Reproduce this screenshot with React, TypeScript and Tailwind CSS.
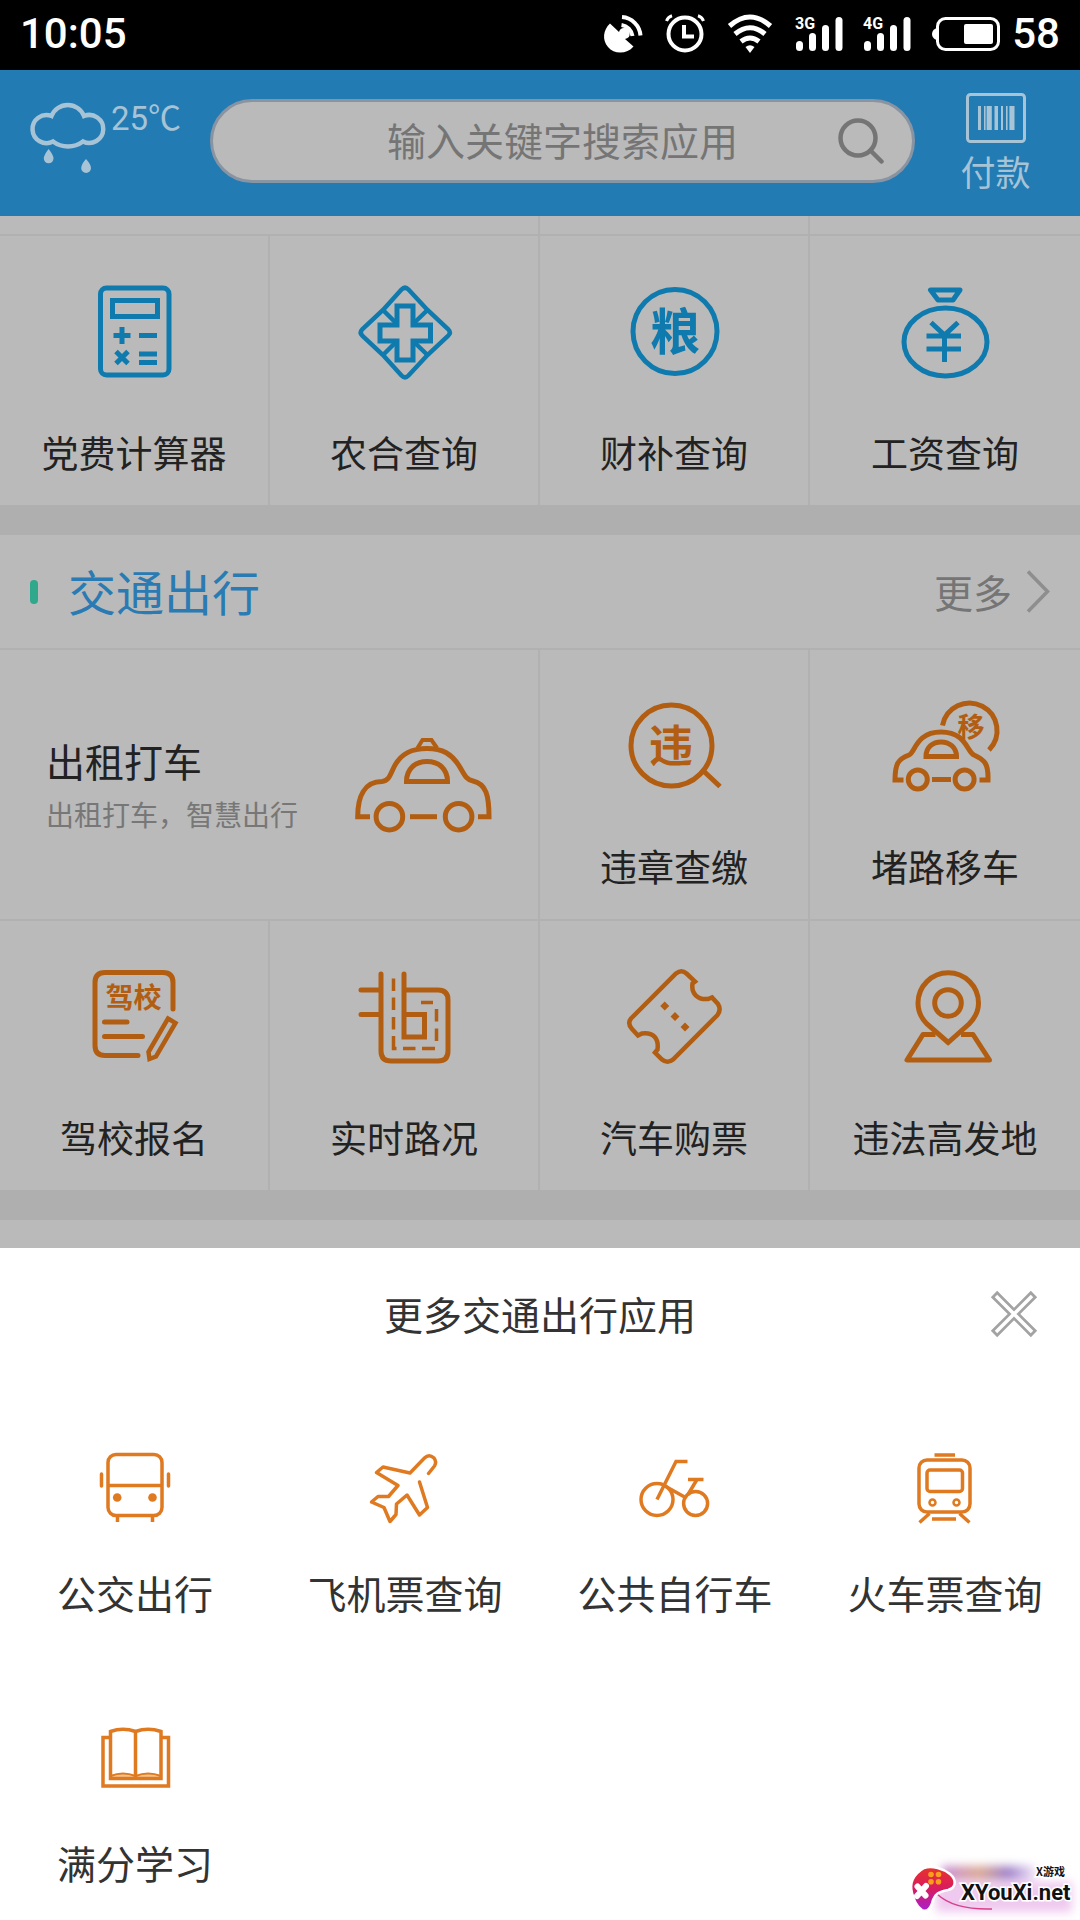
import type { ReactNode } from "react";

type App = { name: string; icon: ReactNode };

const cjkBold = "font-['Noto_Sans_CJK_SC',sans-serif] font-bold";

const DishIcon = () => (
  <svg className="w-[38px] h-[38px] overflow-visible" viewBox="0 0 38 38" fill="none" stroke="currentColor" strokeWidth="4">
    <path d="M6 8.500 15 17A5.500 5.500 0 1 1 21 24L29.500 31.500C23 39.500 10 39.500 4 32C-2 25-1 15 6 8.500Z" fill="currentColor" stroke="none" />
    <path d="M17.500 10A13 13 0 0 1 28.500 21M18 2A20 20 0 0 1 36.500 20.500" />
  </svg>
);

const AlarmIcon = () => (
  <svg className="w-[38px] h-[38px] overflow-visible" viewBox="0 0 38 38" fill="none" stroke="currentColor" strokeWidth="4">
    <circle cx="19" cy="19" r="16.5" />
    <path d="M18 10V21.500H28" />
    <path d="M.5 6Q2 2 6 .8M37.500 6Q36 2 32 .8" strokeWidth="3" />
  </svg>
);

const WifiIcon = () => (
  <svg className="w-[44px] h-[38px] overflow-visible" viewBox="0 0 44 38" fill="none" stroke="currentColor" strokeWidth="5">
    <path d="M1.500 11Q22-7 42.500 11M7 19Q22 6.500 37 19M13 26.500Q22 19.500 31 26.500" />
    <path d="M17.500 32Q22 28.500 26.500 32L22 38Z" fill="currentColor" stroke="none" />
  </svg>
);

const SignalIcon = ({ label }: { label: string }) => (
  <svg className="w-[47px] h-[34px] overflow-visible" viewBox="0 0 47 34" fill="currentColor">
    <text x="-1" y="12" className="font-[Roboto,sans-serif] font-bold text-[16px]">{label}</text>
    <rect x="0" y="24" width="7" height="10" rx="3.5" />
    <rect x="13" y="16" width="7" height="18" rx="3.5" />
    <rect x="26" y="8" width="7" height="26" rx="3.5" />
    <rect x="39.5" y="0" width="7" height="34" rx="3.5" />
  </svg>
);

const BatteryIcon = () => (
  <svg className="w-[68px] h-[34px]" viewBox="0 0 68 34" fill="currentColor">
    <path d="M4.500 11Q0 13 0 17T4.500 23Z" />
    <rect x="5.5" y="1.500" width="61" height="31" rx="8" fill="none" stroke="currentColor" strokeWidth="3" />
    <rect x="32" y="7" width="29" height="20" rx="2" />
  </svg>
);

const RainIcon = () => (
  <svg className="w-[75px] h-[72px] overflow-visible" viewBox="0 0 75 72" fill="none" stroke="currentColor" strokeWidth="4.5">
    <path d="M21.500 14A17.500 17.500 0 0 1 54 14A14 14 0 1 1 53 39.500A25 25 0 0 1 23 39.500A14 14 0 1 1 21.500 14Z" />
    <path d="M18.600 47Q23.500 53 23.500 56.500A4.800 4.800 0 0 1 13.800 56.500Q13.800 53 18.600 47ZM56 57Q61 62.500 61 66A4.800 4.800 0 0 1 51.200 66Q51.200 62.500 56 57Z" fill="currentColor" stroke="none" />
  </svg>
);

const SearchIcon = () => (
  <svg className="w-[46px] h-[46px]" viewBox="0 0 46 46" fill="none" stroke="currentColor" strokeWidth="4.5">
    <circle cx="20" cy="20" r="17.5" />
    <path d="M32.500 32.500 43.500 43.500" strokeLinecap="round" />
  </svg>
);

const BarcodeIcon = () => (
  <svg className="w-[60px] h-[50px]" viewBox="0 0 60 50" fill="currentColor">
    <rect x="1.500" y="1.500" width="57" height="47" rx="3" fill="none" stroke="currentColor" strokeWidth="3" />
    <path d="M12 13h3v24h-3zM18 13h1.600v24H18zM20.600 13h5.200v24h-5.200zM28.500 13H32v24h-3.500zM35 13h2v24h-2zM40 13h1.600v24H40zM43.400 13h5.100v24h-5.100z" />
  </svg>
);

// 96px line icon used by the tiles on the home grid
const TileIcon = ({ children }: { children: ReactNode }) => (
  <svg className="w-24 h-24 overflow-visible" viewBox="0 0 96 96" fill="none" stroke="currentColor" strokeWidth="5">
    {children}
  </svg>
);

// 72px line icon used inside the bottom sheet
const SheetIcon = ({ children }: { children: ReactNode }) => (
  <svg className="w-[72px] h-[72px] overflow-visible" viewBox="0 0 72 72" fill="none" stroke="currentColor" strokeWidth="3.5">
    {children}
  </svg>
);

const TaxiIcon = () => (
  <svg className="w-[137px] h-24 shrink-0 text-[#b25e12]" viewBox="0 0 137 96" fill="none" stroke="currentColor" strokeWidth="5">
    <path d="M15 79.700H2.700C2.700 60 9 44.500 27 44.500C34 44 35 38 39 30C46 16 57 11.500 72 11.500S97 16 106 32C110 39 112 43 118 44C131 47 134 58 134 79.700H123" />
    <path d="M62.500 11 67.500 3H76.500L82 11" strokeWidth="4" />
    <path d="M51.500 44.500C51.500 32 60 24.500 72 24.500S92.500 32 92.500 44.500Z" />
    <circle cx="34.4" cy="79.7" r="13.3" />
    <circle cx="103.6" cy="79.7" r="13.3" />
    <path d="M55 79.700H82" />
  </svg>
);

const queryApps: App[] = [
  {
    name: "党费计算器",
    icon: (
      <TileIcon>
        <rect x="14.5" y="4" width="68.5" height="87" rx="6" />
        <rect x="26.5" y="16.5" width="45" height="16" />
        <path d="M27.500 51.500H44.500M36 43V60M53 51.500H71M53 70H71M53 78.500H71M30 67.500 42 79.500M42 67.500 30 79.500" />
      </TileIcon>
    ),
  },
  {
    name: "农合查询",
    icon: (
      <TileIcon>
        <path d="M27 26 45.500 5.500Q49 2 52.500 5.500L71.500 26 92 45Q95.500 48.500 92 52L71.500 71 52.500 91.500Q49 95 45.500 91.500L27 71 6.500 52Q3 48.500 6.500 45Z" strokeWidth="4.5" />
        <path d="M27 26 40 39M71.500 26 58 39M27 71 40 58M71.500 71 58 58" strokeWidth="4.5" />
        <path d="M41 22H57V41H74.500V57H57V76H41V57H24V41H41Z" />
      </TileIcon>
    ),
  },
  {
    name: "财补查询",
    icon: (
      <TileIcon>
        <circle cx="49" cy="47.5" r="42" />
        <text x="49" y="66" textAnchor="middle" fill="currentColor" stroke="none" className={`${cjkBold} text-[50px]`}>粮</text>
      </TileIcon>
    ),
  },
  {
    name: "工资查询",
    icon: (
      <TileIcon>
        <ellipse cx="48.500" cy="58" rx="41.5" ry="34" />
        <path d="M33.500 6H63L56 16H41Z" strokeLinejoin="round" />
        <path d="M29.500 52H64M29.500 65H64M47.500 50V78M34 38.500 47.500 51 61 38.500" />
      </TileIcon>
    ),
  },
];

const violationApps: App[] = [
  {
    name: "违章查缴",
    icon: (
      <TileIcon>
        <circle cx="45.500" cy="47.500" r="40.5" />
        <path d="M77 72.500 94 88.500" />
        <text x="45" y="64" textAnchor="middle" fill="currentColor" stroke="none" className={`${cjkBold} text-[44px]`}>违</text>
      </TileIcon>
    ),
  },
  {
    name: "堵路移车",
    icon: (
      <TileIcon>
        <path d="M6.500 82H-2C-2 66 1 61 12 57C18 55 19 34 44 34S70 54 77 57C88 62 91.500 66 91 82H82.500" />
        <path d="M29 58.500C29 49 36 44 44 44S59.500 49 59.500 58.500Z" />
        <circle cx="20.800" cy="81.500" r="9.5" />
        <circle cx="67.600" cy="81.500" r="9.5" />
        <path d="M35 81.500H54" />
        <path d="M45.500 27.500A27.500 27.500 0 1 1 92 52" />
        <text x="74" y="39" textAnchor="middle" fill="currentColor" stroke="none" className={`${cjkBold} text-[27px]`}>移</text>
      </TileIcon>
    ),
  },
];

const trafficApps: App[] = [
  {
    name: "驾校报名",
    icon: (
      <TileIcon>
        <path d="M52 86.500H19Q9 86.500 9 76.500V13.500Q9 3.500 19 3.500H77Q87 3.500 87 13.500V40M18.500 53H41M18.500 67.500H56.500" strokeLinecap="round" />
        <path d="M62.500 83 82 49.500 89.500 54 70 87.500 63.500 90Z" strokeWidth="4.5" />
        <text x="47.500" y="39" textAnchor="middle" fill="currentColor" stroke="none" className={`${cjkBold} text-[28px]`}>驾校</text>
      </TileIcon>
    ),
  },
  {
    name: "实时路况",
    icon: (
      <TileIcon>
        <path d="M25 5V82Q25 92 35 92H82Q92 92 92 82V31Q92 21 82 21H48M48 5V68H68.500V45.500H48M5 21H25M5 45.500H25" strokeLinecap="round" />
        <path d="M37.500 9.500V22M37.500 28.500V41M37.500 48V60.500M37.500 67V79.500H40.500M47 79.500H59.500M66 79.500H79M80.500 72V59.500M80.500 52.500V40M77 33.500H65" strokeWidth="3.5" />
      </TileIcon>
    ),
  },
  {
    name: "汽车购票",
    icon: (
      <TileIcon>
        <path d="M5 49.500 50 4.500Q55.500 0 60.500 4.500L69 12.500 66.500 14.500C65 25 72 31 82 30L86 28.500 92 35Q95.500 40.500 91.500 46L47 90.500Q41.500 95 36 90.500L29 83.500 31.500 80.500C33 69 27 63 16 64.500L12 66.500 6 60Q1 54.500 5 49.500Z" strokeWidth="4.5" />
        <path d="M38.700 32.500 43.200 37 38.700 41.500 34.200 37ZM49 43 53.500 47.500 49 52 44.500 47.500ZM59 53.500 63.500 58 59 62.500 54.500 58Z" fill="currentColor" stroke="none" />
      </TileIcon>
    ),
  },
  {
    name: "违法高发地",
    icon: (
      <TileIcon>
        <path d="M51.200 73.500 30 55C24 49 21 41 21 34A30 30 0 0 1 81.500 34C81.500 41 78 49 72 55Z" />
        <circle cx="51" cy="34" r="13.3" />
        <path d="M38.500 65.500H26L10 91H92.500L76 65.500H64" strokeLinejoin="round" />
      </TileIcon>
    ),
  },
];

const moreApps: App[] = [
  {
    name: "公交出行",
    icon: (
      <SheetIcon>
        <rect x="9" y="2.500" width="54" height="61" rx="8" />
        <path d="M9 33.500H63M18.500 65V70M53.500 65V70" />
        <path d="M2.500 22V34M69.500 22V34" strokeLinecap="round" />
        <circle cx="18.200" cy="45.500" r="4.300" fill="currentColor" stroke="none" />
        <circle cx="53.500" cy="45.500" r="4.300" fill="currentColor" stroke="none" />
      </SheetIcon>
    ),
  },
  {
    name: "飞机票查询",
    icon: (
      <SheetIcon>
        <path d="M59.500 21.500 65.500 14Q68 10 65 6Q60 1.500 55.500 6L41 21 14 15 7.500 20.500 29 33.500 19.500 44.500H9L2.500 50 15 55.500 21 69.500 27 62.500 27.500 52 38 43 50.500 63 58.500 55.500 50.500 30" strokeLinecap="round" strokeLinejoin="round" />
      </SheetIcon>
    ),
  },
  {
    name: "公共自行车",
    icon: (
      <SheetIcon>
        <circle cx="18" cy="47.500" r="16" />
        <circle cx="56.600" cy="51.500" r="12" />
        <path d="M18 47.500 37 9.500H48.500M25 33.500 46.500 45.500M49 27.500H64.500M57.700 28 49 42.500" />
      </SheetIcon>
    ),
  },
  {
    name: "火车票查询",
    icon: (
      <SheetIcon>
        <rect x="10" y="8" width="51" height="52" rx="8" />
        <rect x="18" y="18" width="35.5" height="21.500" rx="3" />
        <circle cx="23.500" cy="50.500" r="3" strokeWidth="2.5" />
        <circle cx="47.500" cy="50.500" r="3" strokeWidth="2.5" />
        <path d="M25.500 3H46M23 67H47M20.500 61.500 10.500 70.500M50.500 61.500 60.500 70.500" />
      </SheetIcon>
    ),
  },
  {
    name: "满分学习",
    icon: (
      <SheetIcon>
        <path d="M11 15.500H4V64H69.500V15.500H63" />
        <path d="M11.500 54Q24 49 36.500 54Q49 49 62 54V57H11.500Z" fill="#f6c48f" strokeWidth="2" />
        <path d="M11.500 9.500Q24 5 36.500 9.500Q49 5 62 9.500V56.500H11.500ZM36.500 9.500V56" />
      </SheetIcon>
    ),
  },
];

const StatusBar = () => (
  <div className="flex items-center justify-between h-[70px] px-5 pb-0.5 bg-black text-white font-[Roboto,sans-serif] font-medium text-[42px] leading-[48px]">
    <span>10:05</span>
    <div className="flex items-center gap-6">
      <DishIcon />
      <AlarmIcon />
      <WifiIcon />
      <div className="flex items-center gap-[21px]">
        <SignalIcon label="3G" />
        <SignalIcon label="4G" />
        <div className="flex items-center gap-3">
          <BatteryIcon />
          <span>58</span>
        </div>
      </div>
    </div>
  </div>
);

const Header = () => (
  <header className="flex items-start pt-[23px] pb-[25px] bg-[#227bb3] text-[#a7c3d6]">
    <div className="flex items-start gap-1.5 w-[210px] shrink-0 mt-[9px] pl-[30px]">
      <RainIcon />
      <span className="font-[Roboto,'Noto_Sans_CJK_SC',sans-serif] text-[33px] leading-[34px] whitespace-nowrap">25℃</span>
    </div>
    <div className="flex flex-1 min-w-0 items-center mt-1.5 h-[84px] pl-[74px] pr-7 rounded-full border-[3px] border-[#8994a2] bg-[#bababa] text-[#757575]">
      <input
        type="text"
        aria-label="搜索应用"
        placeholder="输入关键字搜索应用"
        className="flex-1 min-w-0 pb-1 bg-transparent text-center text-[39px] leading-[48px] outline-none placeholder:text-[#757575]"
      />
      <button type="button" aria-label="搜索"><SearchIcon /></button>
    </div>
    <button type="button" className="flex flex-col items-center gap-2 w-[165px] pr-1 shrink-0">
      <BarcodeIcon />
      <span className="text-[35px] leading-10">付款</span>
    </button>
  </header>
);

const Tile = ({ app }: { app: App }) => (
  <a href="#" className="flex flex-col items-center pt-12 pb-[29px] border-r-2 border-[#b1b1b1] last:border-r-0">
    {app.icon}
    <span className="mt-12 text-[37px] leading-[48px] text-[#222] whitespace-nowrap">{app.name}</span>
  </a>
);

const SectionGap = () => <div className="h-[30px] bg-[#afafaf]" />;

const Watermark = () => (
  <svg className="absolute right-0 bottom-0 w-[200px] h-20" viewBox="0 0 200 80">
    <defs>
      <linearGradient id="pad" x1="0" y1="0" x2="0" y2="1">
        <stop offset="0" stopColor="#e8332a" />
        <stop offset=".5" stopColor="#d81b60" />
        <stop offset="1" stopColor="#a81fd0" />
      </linearGradient>
      <linearGradient id="haze">
        <stop offset="0" stopColor="#c58ad8" />
        <stop offset=".4" stopColor="#dba890" />
        <stop offset=".7" stopColor="#9a7cc8" />
        <stop offset="1" stopColor="#f3e6fa" />
      </linearGradient>
      <filter id="soft" x="-20%" y="-50%" width="140%" height="200%">
        <feGaussianBlur stdDeviation="5" />
      </filter>
    </defs>
    <g filter="url(#soft)">
      <rect x="62" y="26" width="94" height="14" fill="url(#haze)" />
      <rect x="56" y="42" width="136" height="30" fill="#efc9ef" />
    </g>
    <path d="M57 54Q74 70 112 69" fill="none" stroke="#d8408c" strokeWidth="1.500" />
    <path d="M44 28C52 25 64 29 70 34C77 40 76 48 68 50C58 52 55 54 53 60C51 68 47 73 42 70C36 66 34 60 32 53C29 42 34 34 44 28Z" fill="url(#pad)" stroke="#fff" strokeWidth="2.500" />
    <path d="M37.500 46.500 45.500 55.500M46 46 37 56" stroke="#fff" strokeWidth="6" strokeLinecap="round" />
    <g fill="#f9a01b">
      <circle cx="51" cy="34.500" r="2.800" />
      <circle cx="58.500" cy="34.500" r="2.800" />
      <circle cx="51" cy="41.800" r="2.800" />
      <circle cx="58.500" cy="41.800" r="2.800" />
    </g>
    <g fill="#111" stroke="#fff" strokeWidth="3" style={{ paintOrder: "stroke" }}>
      <text x="156" y="36" className={`${cjkBold} text-[11px]`}>X游戏</text>
      <text x="81" y="60" className="font-[Roboto,sans-serif] font-bold text-[22px]">XYouXi.net</text>
    </g>
  </svg>
);

const MoreSheet = () => (
  <section role="dialog" aria-labelledby="sheet-title" className="relative flex-1 bg-white">
    <div className="grid grid-cols-[1fr_auto_1fr] items-center h-[132px] px-[42px]">
      <h2 id="sheet-title" className="col-start-2 pb-0.5 text-[39px] leading-[48px] text-[#333]">更多交通出行应用</h2>
      <button type="button" aria-label="关闭" className="justify-self-end">
        <svg className="w-12 h-12" viewBox="0 0 48 48" fill="none">
          <path d="M4 4 44 44M44 4 4 44" stroke="#a3a3a3" strokeWidth="9" />
          <path d="M6 6 42 42M42 6 6 42" stroke="#fff" strokeWidth="3.5" />
        </svg>
      </button>
    </div>
    <div className="grid grid-cols-4 text-[#e07a20]">
      {moreApps.map((app) => (
        <a key={app.name} href="#" className="flex flex-col items-center pt-[72px] pb-[34px]">
          {app.icon}
          <span className="mt-11 text-[39px] leading-[48px] text-[#333] whitespace-nowrap">{app.name}</span>
        </a>
      ))}
    </div>
    <Watermark />
  </section>
);

export default function App() {
  return (
    <div className="flex flex-col min-h-screen bg-[#bababa] font-['Noto_Sans_CJK_SC',sans-serif]">
      <StatusBar />
      <Header />
      <main>
        <div className="grid grid-cols-4 h-[18px]">
          <div className="col-span-2 border-r-2 border-[#b1b1b1]" />
          <div className="border-r-2 border-[#b1b1b1]" />
        </div>
        <div className="grid grid-cols-4 border-t-2 border-[#b1b1b1] text-[#0f7aae]">
          {queryApps.map((app) => <Tile key={app.name} app={app} />)}
        </div>
        <SectionGap />
        <div className="flex items-center justify-between h-[113px] px-[30px]">
          <div className="flex items-center gap-[30px]">
            <span className="w-2 h-6 rounded-full bg-[#2fa88c]" />
            <h2 className="pb-1 text-[48px] leading-[56px] text-[#2a7ab3]">交通出行</h2>
          </div>
          <a href="#" className="flex items-center gap-3.5 text-[39px] leading-[48px] text-[#757575]">
            <span className="pb-0.5">更多</span>
            <svg className="w-6 h-[43px]" viewBox="0 0 24 43" fill="none" stroke="#8e8e8e" strokeWidth="3.5">
              <path d="M2 1.500 21.500 21.500 2 41.500" />
            </svg>
          </a>
        </div>
        <div className="grid grid-cols-4 border-t-2 border-[#b1b1b1] text-[#b25e12]">
          <a href="#" className="col-span-2 flex items-center justify-between px-[46px] border-r-2 border-[#b1b1b1]">
            <div className="flex flex-col gap-2.5">
              <span className="text-[39px] leading-[48px] text-[#222]">出租打车</span>
              <span className="text-[28px] leading-10 text-[#777]">出租打车，智慧出行</span>
            </div>
            <TaxiIcon />
          </a>
          {violationApps.map((app) => <Tile key={app.name} app={app} />)}
        </div>
        <div className="grid grid-cols-4 border-t-2 border-[#b1b1b1] text-[#b25e12]">
          {trafficApps.map((app) => <Tile key={app.name} app={app} />)}
        </div>
        <SectionGap />
        <div className="h-7" />
      </main>
      <MoreSheet />
    </div>
  );
}
